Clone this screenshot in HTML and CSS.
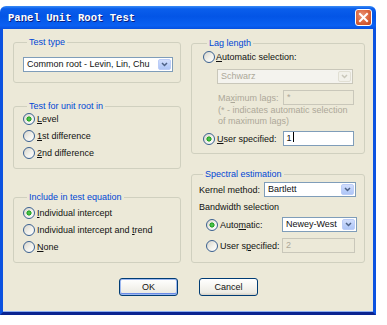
FILE: index.html
```html
<!DOCTYPE html>
<html>
<head>
<meta charset="utf-8">
<link rel="stylesheet" href="styles.css">
</head>
<body>
<div class="window">
  <div class="titlebar">
    <span class="title">Panel Unit Root Test</span>
    <span class="close"><svg width="11" height="11" viewBox="0 0 11 11"><path d="M2 2 L9 9 M9 2 L2 9" stroke="#fff" stroke-width="2" stroke-linecap="square"/></svg></span>
  </div>
  <div class="frame">
    <div class="columns">
      <div class="col col-left">
        <div class="group g-type">
          <div class="legend">Test type</div>
          <div class="combo c-type"><span class="val">Common root - Levin, Lin, Chu</span><span class="arrow"><svg width="7" height="5" viewBox="0 0 7 5"><path d="M1 1 L3.5 3.5 L6 1" fill="none" stroke="#4D6185" stroke-width="1.5"/></svg></span></div>
        </div>
        <div class="group g-unit">
          <div class="legend">Test for unit root in</div>
          <div class="rows">
            <div class="radio-row"><span class="radio checked"></span><span><u>L</u>evel</span></div>
            <div class="radio-row"><span class="radio"></span><span><u>1</u>st difference</span></div>
            <div class="radio-row"><span class="radio"></span><span><u>2</u>nd difference</span></div>
          </div>
        </div>
        <div class="group g-incl">
          <div class="legend">Include in test equation</div>
          <div class="rows">
            <div class="radio-row"><span class="radio checked"></span><span><u>I</u>ndividual intercept</span></div>
            <div class="radio-row"><span class="radio"></span><span>Individual intercept and <u>t</u>rend</span></div>
            <div class="radio-row"><span class="radio"></span><span><u>N</u>one</span></div>
          </div>
        </div>
      </div>
      <div class="col col-right">
        <div class="group g-lag">
          <div class="legend">Lag length</div>
          <div class="radio-row row-auto"><span class="radio"></span><span><u>A</u>utomatic selection:</span></div>
          <div class="combo disabled c-schwarz"><span class="val">Schwarz</span><span class="arrow"><svg width="7" height="5" viewBox="0 0 7 5"><path d="M1 1 L3.5 3.5 L6 1" fill="none" stroke="#C9C7BA" stroke-width="1.5"/></svg></span></div>
          <div class="row-max"><span class="lbl-max">Ma<u>x</u>imum lags:</span><span class="field disabled f-max">*</span></div>
          <div class="note">(* - indicates automatic selection<br>of maximum lags)</div>
          <div class="row-user"><span class="radio checked"></span><span class="lbl-user"><u>U</u>ser specified:</span><span class="field f-user">1<span class="caret"></span></span></div>
        </div>
        <div class="group g-spec">
          <div class="legend">Spectral estimation</div>
          <div class="row-kernel"><span class="lbl-kernel">Kernel method:</span><div class="combo c-kernel"><span class="val">Bartlett</span><span class="arrow"><svg width="7" height="5" viewBox="0 0 7 5"><path d="M1 1 L3.5 3.5 L6 1" fill="none" stroke="#4D6185" stroke-width="1.5"/></svg></span></div></div>
          <div class="bw">Bandwidth selection</div>
          <div class="row-bw row-bauto"><span class="radio checked"></span><span class="lbl-bw">Auto<u>m</u>atic:</span><div class="combo c-newey"><span class="val">Newey-West</span><span class="arrow"><svg width="7" height="5" viewBox="0 0 7 5"><path d="M1 1 L3.5 3.5 L6 1" fill="none" stroke="#4D6185" stroke-width="1.5"/></svg></span></div></div>
          <div class="row-bw row-buser"><span class="radio"></span><span class="lbl-bw">User s<u>p</u>ecified:</span><span class="field disabled f-bw">2</span></div>
        </div>
      </div>
    </div>
    <div class="buttons">
      <span class="btn default">OK</span>
      <span class="btn">Cancel</span>
    </div>
  </div>
</div>
</body>
</html>
```

FILE: styles.css
```css
* { box-sizing: border-box; }
html, body { margin: 0; padding: 0; background: #fff; }
body {
  padding-top: 6px;
  font-family: "Liberation Sans", Arial, sans-serif;
  font-size: 9px;
  color: #111;
}
u { text-decoration: underline; text-underline-offset: 1px; }

.window {
  width: 376px;
  height: 309px;
  display: flex;
  flex-direction: column;
}
.titlebar {
  height: 23px;
  flex: none;
  display: flex;
  align-items: center;
  border-radius: 6px 6px 0 0;
  background: linear-gradient(to bottom, #3A8CF5 0%, #0A5EEC 12%, #0355E6 45%, #0A60F2 85%, #0650E0 100%);
  padding: 0 4px 0 8px;
}
.title {
  flex: 1;
  color: #fff;
  font-family: "Liberation Mono", "Courier New", monospace;
  font-weight: bold;
  font-size: 10.6px;
  text-shadow: 1px 1px 0 #0A1E80;
}
.close {
  width: 17px;
  height: 17px;
  border: 1px solid #fff;
  border-radius: 3px;
  background: radial-gradient(circle at 40% 35%, #EB9478 0%, #DD6B45 45%, #C2431A 100%);
  display: flex;
  align-items: center;
  justify-content: center;
}

.frame {
  flex: 1;
  background: #ECE9D8;
  border: 3px solid #0B52E0;
  border-top: 0;
  border-bottom-color: #0A2490;
  box-shadow: inset 0 -1px 0 #8DAEF0;
  padding: 13px 8px 0 10px;
}
.columns {
  display: flex;
  gap: 10px;
}
.col { display: flex; flex-direction: column; }
.col-left { width: 168px; }
.col-right { width: 174px; margin-top: 1px; }

.group {
  border: 1px solid #D0D0BF;
  border-radius: 3px;
}
.legend {
  width: fit-content;
  height: 12px;
  line-height: 12px;
  margin: -7px 0 0 4px;
  padding: 0 2px;
  background: #ECE9D8;
  color: #0046D5;
  white-space: nowrap;
}

.g-type { height: 41px; padding-left: 9px; }
.c-type { margin-top: 9px; width: 150px; }
.g-unit { height: 63px; margin-top: 23px; padding-left: 9px; }
.g-unit .rows { margin-top: -2px; }
.g-incl { height: 66px; margin-top: 28px; padding-left: 9px; }
.g-incl .rows { margin-top: 1px; }

.radio-row {
  display: flex;
  align-items: center;
  gap: 2px;
  height: 17px;
  white-space: nowrap;
}
.radio {
  flex: none;
  width: 12px;
  height: 12px;
  border-radius: 50%;
  border: 1px solid #3A6090;
  background: linear-gradient(135deg, #D8D5CB 0%, #F2F1EB 55%, #fff 100%);
}
.radio.checked {
  background: radial-gradient(circle at 50% 50%, #5FD05F 0, #21A121 2.2px, rgba(33,161,33,0) 2.9px),
              linear-gradient(135deg, #D8D5CB 0%, #F2F1EB 55%, #fff 100%);
}

.combo {
  display: flex;
  height: 15px;
  border: 1px solid #7F9DB9;
  background: #fff;
}
.combo .val {
  flex: 1;
  padding-left: 3px;
  line-height: 13px;
  white-space: nowrap;
  overflow: hidden;
}
.combo .arrow {
  flex: none;
  width: 13px;
  margin: 1px;
  border-radius: 2px;
  background: linear-gradient(to bottom, #D2DEFC 0%, #BACEF9 60%, #AFC6F6 100%);
  border: 1px solid #BCCDF7;
  display: flex;
  align-items: center;
  justify-content: center;
}
.combo.disabled {
  border-color: #C9C7BA;
  background: #F4F3EE;
  color: #ACA899;
}
.combo.disabled .arrow {
  background: #F2F1EA;
  border-color: #E1DFD3;
}

.field {
  display: block;
  height: 15px;
  border: 1px solid #7F9DB9;
  background: #fff;
  padding-left: 3px;
  line-height: 13px;
}
.field.disabled {
  border-color: #C9C7BA;
  background: #ECE9D8;
  color: #ACA899;
}
.caret {
  display: inline-block;
  width: 1px;
  height: 10px;
  background: #000;
  vertical-align: -1px;
  margin-left: 1px;
}

.g-lag { height: 111px; padding-left: 11px; padding-right: 10px; }
.row-auto { height: 16px; gap: 1px; }
.c-schwarz { margin: 4px 0 0 14px; width: 136px; }
.row-max {
  display: flex;
  align-items: center;
  margin: 6px 0 0 15px;
  color: #ACA899;
}
.lbl-max { width: 65px; white-space: nowrap; }
.f-max { width: 71px; }
.note {
  margin-left: 15px;
  line-height: 11px;
  color: #ACA899;
  white-space: nowrap;
}
.row-user {
  display: flex;
  align-items: center;
  margin-top: 4px;
}
.lbl-user { width: 66px; margin-left: 2px; white-space: nowrap; }
.f-user { width: 72px; }

.g-spec { height: 89px; margin-top: 20px; padding-left: 7px; padding-right: 7px; }
.row-kernel {
  display: flex;
  align-items: center;
  margin-top: 2px;
}
.lbl-kernel { width: 65px; white-space: nowrap; }
.c-kernel { width: 92px; }
.bw { margin-top: 4px; line-height: 12px; }
.row-bw {
  display: flex;
  align-items: center;
  margin-left: 7px;
}
.row-bauto { margin-top: 4px; }
.row-buser { margin-top: 6px; }
.lbl-bw { width: 62px; margin-left: 2px; white-space: nowrap; }
.c-newey { width: 75px; }
.f-bw { width: 73px; }

.buttons {
  display: flex;
  justify-content: center;
  gap: 21px;
  margin-top: 15px;
  padding-right: 1px;
}
.btn {
  width: 59px;
  height: 18px;
  border: 1px solid #003C74;
  border-radius: 3px;
  background: linear-gradient(to bottom, #FFFFFF 0%, #F5F4EF 50%, #ECEBE4 85%, #D6D0C5 100%);
  display: flex;
  align-items: center;
  justify-content: center;
}
.btn.default {
  box-shadow: inset 0 0 0 1px #9DB8F0, inset 0 -1px 0 1px #6A8BE6;
}
```
